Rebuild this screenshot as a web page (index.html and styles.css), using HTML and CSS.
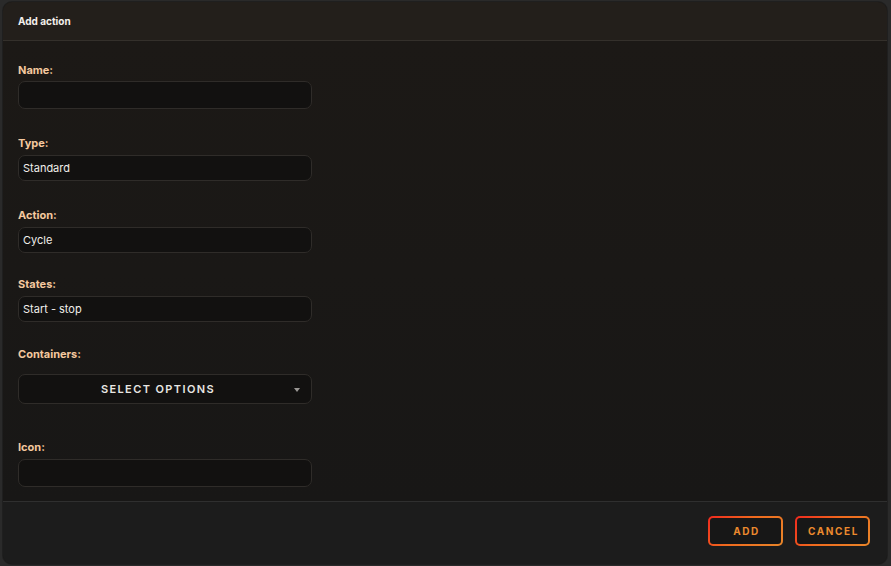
FILE: index.html
```html
<!DOCTYPE html>
<html>
<head>
<meta charset="utf-8">
<link rel="stylesheet" href="styles.css">
</head>
<body>
<div class="modal">
  <div class="modal-header">Add action</div>
  <div class="modal-body">
    <div class="field field-name">
      <div class="label">Name:</div>
      <div class="input input-tall"></div>
    </div>
    <div class="field field-gap">
      <div class="label">Type:</div>
      <div class="input">Standard</div>
    </div>
    <div class="field field-gap">
      <div class="label">Action:</div>
      <div class="input">Cycle</div>
    </div>
    <div class="field field-gap-xs">
      <div class="label">States:</div>
      <div class="input">Start - stop</div>
    </div>
    <div class="field field-gap-sm">
      <div class="label label-wide">Containers:</div>
      <div class="select">
        <span class="select-text">SELECT OPTIONS</span>
        <span class="caret"></span>
      </div>
    </div>
    <div class="field field-gap-lg">
      <div class="label">Icon:</div>
      <div class="input input-tall"></div>
    </div>
  </div>
  <div class="modal-footer">
    <button class="btn btn-add">ADD</button>
    <button class="btn btn-cancel">CANCEL</button>
  </div>
</div>
</body>
</html>
```

FILE: styles.css
```css
* { box-sizing: border-box; }
html, body { margin: 0; padding: 0; }
body {
  width: 891px;
  height: 566px;
  background: #2a2a2a;
  font-family: "Inter", "Liberation Sans", sans-serif;
  overflow: hidden;
}
.modal {
  margin: 2px 4px 0 3px;
  width: 884px;
  height: 562px;
  border-radius: 9px;
  background: #1a1816;
  display: flex;
  flex-direction: column;
  overflow: hidden;
  box-shadow: 0 0 0 1px #1f1f1f;
}
.modal-header {
  height: 39px;
  flex: none;
  background: #231f1b;
  border-bottom: 1px solid #34302b;
  color: #f4f1ec;
  font-weight: 700;
  font-size: 10px;
  padding-left: 15px;
  display: flex;
  align-items: center;
  padding-bottom: 1px;
}
.modal-body {
  flex: 1;
  padding: 22px 15px 0 15px;
  background: linear-gradient(#1c1916, #181716);
}
.field { width: 294px; }
.field-gap { margin-top: 27px; }
.field-gap-xs { margin-top: 24px; }
.field-gap-sm { margin-top: 25px; }
.field-gap-lg { margin-top: 36px; }
.label {
  height: 14px;
  line-height: 14px;
  font-size: 11px;
  font-weight: 700;
  color: #f4c89e;
  margin-bottom: 5px;
}
.label-wide { margin-bottom: 13px; }
.field-name .label { margin-bottom: 4px; }
.input {
  height: 26px;
  border: 1px solid #2f2c29;
  border-radius: 7px;
  background: #121110;
  color: #f0eeea;
  font-size: 11px;
  padding-left: 4px;
  display: flex;
  align-items: center;
}
.input-tall { height: 28px; }
.select {
  height: 30px;
  border: 1px solid #2f2c29;
  border-radius: 7px;
  background: #121110;
  display: flex;
  align-items: center;
  justify-content: center;
  position: relative;
  padding-right: 14px;
}
.select-text {
  color: #e8e6e2;
  font-size: 11px;
  font-weight: 600;
  letter-spacing: 1.4px;
}
.caret {
  position: absolute;
  right: 11px;
  top: 13px;
  width: 0;
  height: 0;
  border-left: 3px solid transparent;
  border-right: 3px solid transparent;
  border-top: 4px solid #9a9794;
}
.modal-footer {
  height: 63px;
  flex: none;
  border-top: 1px solid #2f2f2f;
  background: #1c1c1c;
  display: flex;
  justify-content: flex-end;
  align-items: center;
  gap: 12px;
  padding-right: 17px;
  padding-bottom: 4px;
}
.btn {
  width: 75px;
  height: 30px;
  border: 2px solid transparent;
  border-radius: 5px;
  background:
    linear-gradient(#171717, #171717) padding-box,
    linear-gradient(135deg, #f0281e 0%, #f06a1e 45%, #e8862a 100%) border-box;
  color: #ec8a2e;
  font-family: "Inter", "Liberation Sans", sans-serif;
  font-weight: 700;
  font-size: 10px;
  letter-spacing: 1.6px;
  padding: 0;
  padding-left: 2px;
}
```
